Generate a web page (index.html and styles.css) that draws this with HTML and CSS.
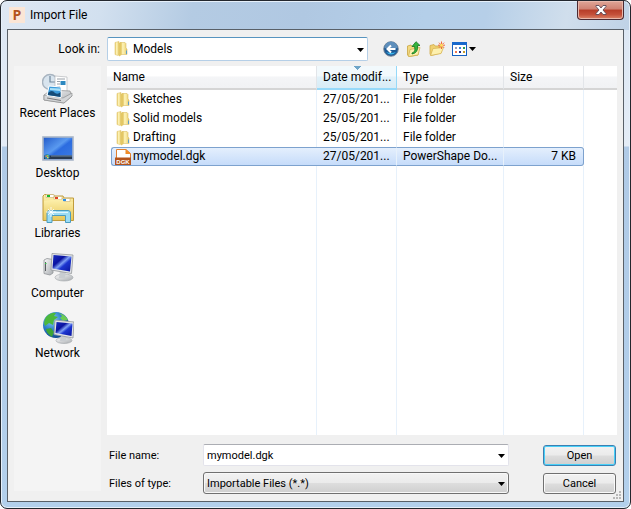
FILE: index.html
```html
<!DOCTYPE html>
<html lang="en">

<head>
    <meta charset="utf-8">
    <title>Import File</title>
    <link rel="stylesheet" href="styles.css">
</head>

<body>

    <svg class="defs" width="0" height="0">
        <defs>
            <linearGradient id="gold" x1="0" x2="1" y1="0" y2="0">
                <stop offset="0" stop-color="#e6c866"/>
                <stop offset="0.4" stop-color="#fdf3b8"/>
                <stop offset="0.75" stop-color="#f3df8e"/>
                <stop offset="1" stop-color="#dfc05a"/>
            </linearGradient>
            <linearGradient id="tab" x1="0" x2="0" y1="0" y2="1">
                <stop offset="0" stop-color="#fdf0ac"/>
                <stop offset="1" stop-color="#e8c758"/>
            </linearGradient>
            <linearGradient id="screen" x1="0" x2="1" y1="0" y2="1">
                <stop offset="0" stop-color="#1a2fc0"/>
                <stop offset="0.35" stop-color="#0a12a0"/>
                <stop offset="0.5" stop-color="#7fa0f4"/>
                <stop offset="0.62" stop-color="#1c35d0"/>
                <stop offset="1" stop-color="#0a149c"/>
            </linearGradient>
            <linearGradient id="desk" x1="0" x2="1" y1="0" y2="1">
                <stop offset="0" stop-color="#2058c8"/>
                <stop offset="0.45" stop-color="#5a9af0"/>
                <stop offset="0.55" stop-color="#2c6ce0"/>
                <stop offset="1" stop-color="#3c7ce4"/>
            </linearGradient>
            <radialGradient id="globe" cx="0.35" cy="0.3" r="0.8">
                <stop offset="0" stop-color="#8fd0f8"/>
                <stop offset="0.5" stop-color="#2a7cc8"/>
                <stop offset="1" stop-color="#0c3c80"/>
            </radialGradient>
            <linearGradient id="silver" x1="0" x2="1" y1="0" y2="1">
                <stop offset="0" stop-color="#fafafa"/>
                <stop offset="1" stop-color="#a8acb0"/>
            </linearGradient>
            <symbol id="folder" viewBox="0 0 16 16">
                <path d="M7 1.500 H12 L13 2.500 V7 L14 8 V13.500 H7Z" fill="url(#gold)" stroke="#dcc068" stroke-width=".6"/>
                <path d="M2 1.500 L6 .5 V14 L5 14.500 L2 13.500Z" fill="url(#gold)" stroke="#e0c670" stroke-width=".6"/>
                <path d="M6 2 L8.500 1 V14 L6 15.500Z" fill="#e3c765"/>
                <path d="M13.500 9.500 V13" stroke="#5c9cc8"/>
            </symbol>
            <symbol id="arrow" viewBox="0 0 7 4">
                <path d="M0 0 H7 L3.500 4Z"/>
            </symbol>
        </defs>
    </svg>

    <div class="window">
        <div class="title-bar">
            <svg class="app-icon" viewBox="0 0 16 16" width="16" height="16">
                <rect width="16" height="16" fill="#fbe6d6"/>
                <text x="8" y="13" class="app-letter">P</text>
            </svg>
            <h1>Import File</h1>
            <button class="close" type="button" aria-label="Close">
                <svg viewBox="0 0 12 10" width="12" height="10">
                    <path d="M1 .5 H4 L6 3 L8 .5 H11 V1.500 L8 5 L11 8.500 V9.500 H8 L6 7 L4 9.500 H1 V8.500 L4 5 L1 1.500Z" fill="#fff" stroke="#5b4a58" stroke-width=".9"/>
                </svg>
            </button>
        </div>

        <form class="client">
            <div class="look-row">
                <label for="lookIn">Look in:</label>
                <div class="combo look-combo">
                    <svg class="combo-icon" width="16" height="16"><use href="#folder"/></svg>
                    <select id="lookIn">
                        <option>Models</option>
                    </select>
                    <svg class="combo-arrow" width="7" height="4"><use href="#arrow"/></svg>
                </div>
                <div class="tools">
                    <button type="button" title="Back">
                        <svg viewBox="0 0 16 16" width="16" height="16">
                            <circle cx="8" cy="8" r="7.300" fill="#1d5a96" stroke="#7c8894" stroke-width=".9"/>
                            <path d="M1.500 7 A6.500 6.500 0 0 1 14.500 7 Q8 9 1.500 7Z" fill="#5e8fbc"/>
                            <path d="M3 11 Q8 16 13 11 Q8 13 3 11Z" fill="#3cb8ec"/>
                            <path d="M12.500 8 H4.500 M8 4.500 L4.500 8 L8 11.500" fill="none" stroke="#fff" stroke-width="2"/>
                        </svg>
                    </button>
                    <button type="button" title="Up one level">
                        <svg viewBox="0 0 16 16" width="16" height="16">
                            <path d="M1.500 5 L5 4 L6 5.500 H12 V14 L3 15.500 L1.500 14Z" fill="#f3d980" stroke="#c8a440" stroke-width=".8"/>
                            <path d="M4 8.500 L14 6.500 L12 14 L2.500 15.500Z" fill="#fdf0ae" stroke="#d2b050" stroke-width=".8"/>
                            <path d="M6 12 Q10 11 8.500 5.500 H6 L10 .7 L14 4.500 H11.500 Q12.500 12 6 13Z" fill="#34b43c" stroke="#167a22" stroke-width=".8"/>
                        </svg>
                    </button>
                    <button type="button" title="New folder">
                        <svg viewBox="0 0 16 16" width="16" height="16">
                            <path d="M1 4.500 L5 3.500 L6 5 H12 V12 L2 14.500 L1 13Z" fill="#f0d070" stroke="#cfa94a" stroke-width=".8"/>
                            <path d="M4 7.500 L14.500 6.500 L12 12.500 L1.500 14.500Z" fill="#fdf0ae" stroke="#d8b556" stroke-width=".8"/>
                            <path d="M12.500 0.500 V8 M9 4.200 H16 M10 1.700 L15 6.700 M15 1.700 L10 6.700" stroke="#f0683c" stroke-width="1"/>
                            <circle cx="12.500" cy="4.200" r="1.500" fill="#ffe060"/>
                        </svg>
                    </button>
                    <button type="button" title="View menu" class="view">
                        <svg viewBox="0 0 15 14" width="15" height="14">
                            <rect x=".5" y=".5" width="14" height="13" fill="#fff" stroke="#1460c0"/>
                            <rect width="15" height="3" fill="#1768cc"/>
                            <path d="M3 5 h2 v2 h-2z" fill="#9a9cb8"/>
                            <path d="M7 5 h2 v2 h-2z" fill="#3c80d8"/>
                            <path d="M11 5 h2 v2 h-2z" fill="#2c9c50"/>
                            <path d="M3 9 h2 v2 h-2z" fill="#f07850"/>
                            <path d="M7 9 h2 v2 h-2z" fill="#1c2c90"/>
                            <path d="M11 9 h2 v2 h-2z" fill="#c89c28"/>
                        </svg>
                        <svg width="7" height="4"><use href="#arrow"/></svg>
                    </button>
                </div>
            </div>

            <div class="middle">
                <nav class="places">
                    <a href="#recent">
                        <svg viewBox="0 0 32 32" width="32" height="32">
                            <circle cx="8" cy="10" r="7.500" fill="#d8e4ee" stroke="#a8b4c0" stroke-width="1.400"/>
                            <path d="M8 4 V10 H13" fill="none" stroke="#70889c" stroke-width="1.200"/>
                            <path d="M13 4 L25 5 V20 H13Z" fill="#fff" stroke="#b4b8bc" stroke-width=".7"/>
                            <path d="M15 7 H23 M15 9.500 H18 M15 12 H18 M15 14.500 H18" stroke="#98a0a8"/>
                            <rect x="18.500" y="9" width="5" height="4" fill="#2c88c0"/>
                            <path d="M2 23 L9 18 L28 19 L30 24 L22 31 L2 28Z" fill="url(#silver)" stroke="#8c8c8c" stroke-width=".7"/>
                            <path d="M2 23 L21 26 L30 21 V24 L22 31 L2 28Z" fill="#d4d6d8" stroke="#848688" stroke-width=".6"/>
                            <path d="M7 14 L19 15 V25.500 L5 23.500Z" fill="#3c9cdc" stroke="#fff"/>
                            <path d="M6 21 Q10 17 13 21 Q16 23 18.500 20 V25 L6 23Z" fill="#154c78"/>
                            <path d="M8 16 L18 16.500 V19 L8 18Z" fill="#a8e0f8"/>
                            <path d="M5 26 L19 28.500" stroke="#787a7c"/>
                        </svg>
                        <span>Recent Places</span>
                    </a>
                    <a href="#desktop">
                        <svg viewBox="0 0 32 32" width="32" height="32">
                            <rect x="1" y="5" width="30" height="23" fill="url(#desk)" stroke="#a9b6c8" stroke-width="1.600"/>
                            <rect x="2" y="23.500" width="28" height="3.500" fill="#28384e"/>
                            <path d="M9 24 H30" stroke="#70889c"/>
                            <circle cx="5" cy="24.500" r="2.600" fill="#2c84b4"/>
                            <path d="M3.500 23.500 h1.500 v1.500 h-1.500z" fill="#f08040"/>
                            <path d="M5 23 h1.500 v1.500 h-1.500z" fill="#8cd850"/>
                            <path d="M5 25 h1.500 v1.300 h-1.500z" fill="#f8d848"/>
                        </svg>
                        <span>Desktop</span>
                    </a>
                    <a href="#libraries">
                        <svg viewBox="0 0 32 32" width="32" height="32">
                            <path d="M1 28.500 V4 L2.500 2.500 H11 L12 4 H21 L22 6 H31.500 V28.500Z" fill="url(#tab)" stroke="#c09c3c"/>
                            <path d="M4 2.500 h8 v3 h-8z M12 4.500 h8 v3 h-8z M20 6.500 h8 v3 h-8z" fill="#fff" stroke="#c8b070" stroke-width=".6"/>
                            <path d="M5 3 h3 v2 h-3z" fill="#1cb82c"/>
                            <path d="M13 5 h3 v2 h-3z" fill="#e04424"/>
                            <path d="M21 7 h3 v2 h-3z" fill="#2c90e8"/>
                            <path d="M2 9 L13 7.500 H20 L22 10 H31 V28 H2Z" fill="url(#tab)"/>
                            <path d="M5 30.500 V21 Q5 18.500 7.500 18.500 H26 Q28.500 18.500 28.500 21 V30.500 H23.500 V23.500 H10 V30.500Z" fill="#9cdcf4" stroke="#4c9cc0"/>
                            <path d="M8 20.500 H26" stroke="#dff6ff"/>
                            <path d="M9 15 V25 M4 20 H14 M6 17 L12 23 M12 17 L6 23" stroke="#fff" stroke-width=".8"/>
                        </svg>
                        <span>Libraries</span>
                    </a>
                    <a href="#computer">
                        <svg viewBox="0 0 32 32" width="32" height="32">
                            <path d="M2 8 L5 6.500 L11 7.500 V21 L8 23 L2 21.500Z" fill="url(#silver)" stroke="#909498" stroke-width=".8"/>
                            <path d="M3.500 10 V19" stroke="#585c60"/>
                            <path d="M3 11.500 h1.500" stroke="#34c848"/>
                            <ellipse cx="22" cy="25.500" rx="9" ry="3.500" fill="url(#silver)" stroke="#a0a4a8" stroke-width=".6"/>
                            <path d="M18 18 L24 19 L23 26 H17Z" fill="#c8ccd0"/>
                            <path d="M10 1.500 L31 3 L29.500 21.500 L9 18Z" fill="#e4e6e8" stroke="#94989c" stroke-width=".8"/>
                            <path d="M11.500 3 L29.500 4.500 L28 19.500 L10.500 16.500Z" fill="url(#screen)"/>
                        </svg>
                        <span>Computer</span>
                    </a>
                    <a href="#network">
                        <svg viewBox="0 0 32 32" width="32" height="32">
                            <circle cx="14" cy="13" r="13" fill="url(#globe)"/>
                            <path d="M4 5 Q9 0 14 1 L12 4 L16 5 L12 8 L11 13 L7 11 L3 14 Q1 10 4 5Z" fill="#4cb83c"/>
                            <path d="M17 1 Q24 3 26 8 L21 9 L18 6 L20 4Z" fill="#6ccc54"/>
                            <path d="M4 17 L9 16 L12 20 L10 25 Q4 21 4 17Z" fill="#3ca434"/>
                            <ellipse cx="22" cy="28.500" rx="8" ry="3" fill="url(#silver)" stroke="#a0a4a8" stroke-width=".6"/>
                            <path d="M19 23 H24 V29 H18Z" fill="#c8ccd0"/>
                            <path d="M13 8 L32 10 L31 26 L12 22.500Z" fill="#e4e6e8" stroke="#94989c" stroke-width=".8"/>
                            <path d="M14.500 10 L30.500 11.500 L29.500 24 L13.500 21Z" fill="url(#screen)"/>
                        </svg>
                        <span>Network</span>
                    </a>
                </nav>

                <div class="file-list">
                    <table>
                        <colgroup>
                            <col class="col-name">
                            <col class="col-date">
                            <col class="col-type">
                            <col class="col-size">
                            <col>
                        </colgroup>
                        <thead>
                            <tr>
                                <th>Name</th>
                                <th class="sorted">Date modif...</th>
                                <th>Type</th>
                                <th>Size</th>
                                <th></th>
                            </tr>
                        </thead>
                        <tbody>
                            <tr>
                                <td><div class="name"><svg width="16" height="16"><use href="#folder"/></svg>Sketches</div></td>
                                <td>27/05/201...</td>
                                <td>File folder</td>
                                <td class="size"></td>
                                <td></td>
                            </tr>
                            <tr>
                                <td><div class="name"><svg width="16" height="16"><use href="#folder"/></svg>Solid models</div></td>
                                <td>25/05/201...</td>
                                <td>File folder</td>
                                <td class="size"></td>
                                <td></td>
                            </tr>
                            <tr>
                                <td><div class="name"><svg width="16" height="16"><use href="#folder"/></svg>Drafting</div></td>
                                <td>25/05/201...</td>
                                <td>File folder</td>
                                <td class="size"></td>
                                <td></td>
                            </tr>
                            <tr class="selected">
                                <td>
                                    <div class="name">
                                        <svg viewBox="0 0 16 16" width="16" height="16">
                                            <path d="M1.500 .5 H11 L15.500 4.500 V15.500 H1.500Z" fill="#fff" stroke="#e08030"/>
                                            <path d="M10.500 0 L16 5 H10.500Z" fill="#f08c28"/>
                                            <rect x="0" y="8.500" width="16" height="7.500" fill="#b4541c"/>
                                            <text x="8" y="14.500" class="badge-text">DGK</text>
                                        </svg>mymodel.dgk
                                    </div>
                                </td>
                                <td>27/05/201...</td>
                                <td>PowerShape Do...</td>
                                <td class="size">7 KB</td>
                                <td></td>
                            </tr>
                            <tr class="rest">
                                <td></td>
                                <td></td>
                                <td></td>
                                <td></td>
                                <td></td>
                            </tr>
                        </tbody>
                    </table>
                </div>

                <div class="fields">
                    <label for="fileName">File name:</label>
                    <div class="combo name-combo">
                        <input type="text" id="fileName" value="mymodel.dgk">
                        <svg class="combo-arrow" width="7" height="4"><use href="#arrow"/></svg>
                    </div>
                    <button type="submit" class="btn default">Open</button>

                    <label for="fileType">Files of type:</label>
                    <div class="combo type-combo">
                        <select id="fileType">
                            <option>Importable Files (*.*)</option>
                        </select>
                        <svg class="combo-arrow" width="7" height="4"><use href="#arrow"/></svg>
                    </div>
                    <button type="button" class="btn">Cancel</button>
                </div>
            </div>

            <svg class="grip" viewBox="0 0 8 8" width="8" height="8">
                <path d="M6 0h2v2h-2z M3 3h2v2h-2z M6 3h2v2h-2z M0 6h2v2h-2z M3 6h2v2h-2z M6 6h2v2h-2z" fill="#b8b8b8"/>
            </svg>
        </form>
    </div>

</body>

</html>
```

FILE: styles.css
```css
* {
    box-sizing: border-box;
}

body {
    margin: 0;
    background: #fff;
    color: #000;
    font-family: Roboto, "Open Sans", sans-serif;
    font-size: 12px;
}

.defs {
    position: absolute;
}

button,
input,
select {
    margin: 0;
    color: inherit;
    font: inherit;
}

.window {
    display: flex;
    flex-direction: column;
    height: 100vh;
    padding: 0 6px 6px;
    border: 1px solid #23272e;
    border-radius: 7px;
    background:
        linear-gradient(100deg, #dfe8f3 0, #d2e0ef 100px, #b4cbe3 190px, #b0c8e2 300px, #b4cfe9 420px, #b6cfe8 480px, #d0deec 560px, #bfd2e6 100%) top / 100% 29px no-repeat,
        linear-gradient(#dbe6f3 0, #e4ecf6 145px, #b0cae6 146px, #b3d0ec 100%);
    box-shadow: inset 0 0 0 1px #e6f0fa;
}

/* title bar */
.title-bar {
    display: flex;
    flex: none;
    align-items: center;
    height: 28px;
    padding: 0 0 0 2px;
}

.app-letter {
    fill: #b4531c;
    font: bold 14px "Open Sans", sans-serif;
    text-anchor: middle;
}

.title-bar h1 {
    flex: 1;
    margin: 0 0 0 5px;
    font-size: 12px;
    font-weight: normal;
}

.close {
    display: flex;
    align-items: center;
    align-self: flex-start;
    justify-content: center;
    width: 47px;
    height: 19px;
    padding: 0;
    border: 1px solid #4b2a32;
    border-top: 0;
    border-radius: 0 0 4px 4px;
    background: linear-gradient(#e0a698 0, #d08272 45%, #b63c28 50%, #c4503a 75%, #dc8468 100%);
    box-shadow: inset 0 0 0 1px #e8b8ac;
}

/* dialog area */
.client {
    position: relative;
    display: flex;
    flex: 1;
    flex-direction: column;
    min-height: 0;
    padding: 7px 6px;
    border: 1px solid #596068;
    background: #f0f0f0;
}

.look-row {
    display: flex;
    align-items: center;
    height: 24px;
    margin-bottom: 5px;
}

.look-row label {
    width: 86px;
    margin-right: 7px;
    text-align: right;
}

.combo {
    position: relative;
    display: flex;
}

.combo select,
.combo input {
    width: 100%;
    height: 100%;
    padding: 0 20px 0 3px;
    border: 1px solid #e3e3eb;
    border-radius: 2px;
    outline: 0;
    background: #fff;
    appearance: none;
}

.combo-icon {
    position: absolute;
    top: 4px;
    left: 6px;
}

.combo-arrow {
    position: absolute;
    top: 11px;
    right: 4px;
    pointer-events: none;
}

.look-combo {
    flex: 0 1 261px;
    height: 24px;
}

.look-combo select {
    padding-left: 25px;
    border-color: #b5cfe7;
    border-top-color: #5794bf;
}

.tools {
    display: flex;
    gap: 7px;
    margin-left: 15px;
}

.tools button {
    display: flex;
    align-items: center;
    padding: 0;
    border: 0;
    background: none;
}

.tools .view {
    gap: 2px;
}

/* places bar, list and fields */
.middle {
    display: grid;
    flex: 1;
    grid-template-columns: 87px 1fr;
    grid-template-rows: 1fr auto;
    column-gap: 6px;
    min-height: 0;
}

.places {
    display: flex;
    flex-direction: column;
    grid-row: 1 / 3;
    gap: 10px;
    margin-bottom: 3px;
    padding-top: 6px;
    background: #f4f4f4;
}

.places a {
    display: flex;
    flex-direction: column;
    align-items: center;
    height: 50px;
    color: #000;
    line-height: 18px;
    text-decoration: none;
    white-space: nowrap;
}

.places svg {
    flex: none;
}

.file-list {
    display: flex;
    background: #fff;
}

.file-list table {
    width: 100%;
    height: 100%;
    border-collapse: separate;
    border-spacing: 0;
    table-layout: fixed;
}

.col-name {
    width: 210px;
}

.col-date,
.col-size {
    width: 80px;
}

.col-type {
    width: 107px;
}

.file-list th {
    height: 24px;
    padding: 0 0 0 6px;
    border-right: 1px solid #e2e5e9;
    border-bottom: 2px solid #d5d5d5;
    background: linear-gradient(#fff 45%, #f4f5f7 50%, #f1f2f4);
    font-weight: normal;
    text-align: left;
    white-space: nowrap;
}

.file-list th:last-child {
    border-right: 0;
}

.file-list th.sorted {
    border-right-color: #96d9f9;
    border-bottom-color: #96d9f9;
    background:
        conic-gradient(from -45deg at 50% 100%, #6fa5c8 90deg, transparent 0) 36px 0 / 8px 4px no-repeat,
        linear-gradient(#f2f9fc 45%, #e1f1f9 50%, #d8ecf6);
}

.file-list td {
    height: 19px;
    padding: 0 0 0 6px;
    border-right: 1px solid #e7f1fb;
    line-height: 17px;
    white-space: nowrap;
}

.file-list td:first-child {
    padding-left: 4px;
}

.file-list td:last-child {
    border-right: 0;
}

.file-list td.size {
    padding-right: 7px;
    text-align: right;
}

.name {
    display: flex;
    gap: 2px;
    align-items: center;
    height: 19px;
    padding-left: 4px;
}

.selected .name,
.selected td:not(:first-child):not(:last-child) {
    border-top: 1px solid #7da2ce;
    border-bottom: 1px solid #7da2ce;
    background: linear-gradient(#e4effd, #c6dcfa);
}

.file-list .selected td:first-child {
    border-right: 0;
}

.selected .name {
    padding-left: 3px;
    border-left: 1px solid #7da2ce;
    border-radius: 3px 0 0 3px;
}

.selected .size {
    border-right-color: #7da2ce;
    border-radius: 0 3px 3px 0;
}

.badge-text {
    fill: #fff;
    font: bold 6px "Liberation Sans", sans-serif;
    text-anchor: middle;
}

.file-list .rest td {
    height: auto;
}

.fields {
    display: grid;
    grid-template-columns: 94px 1fr 73px;
    gap: 6px 0;
    align-items: center;
    padding: 9px 1px 0 2px;
    font-size: 11px;
}

.fields .combo {
    height: 22px;
    margin-right: 34px;
}

.name-combo input {
    border-top-color: #abadb3;
}

.fields .combo-arrow {
    top: 10px;
}

.type-combo select {
    border-color: #707070;
    border-radius: 3px;
    background: linear-gradient(#f2f2f2 0, #ebebeb 48%, #dddddd 52%, #cfcfcf);
    box-shadow: inset 0 0 0 1px #f8f8f8;
}

.btn {
    height: 21px;
    padding: 0;
    border: 1px solid #707070;
    border-radius: 3px;
    background: linear-gradient(#f2f2f2 0, #ebebeb 48%, #dddddd 52%, #cfcfcf);
    box-shadow: inset 0 0 0 1px #fafafa;
}

.btn.default {
    border-color: #3c7fb1;
    box-shadow: inset 0 0 0 1px #48d0f8;
}

.grip {
    position: absolute;
    right: 2px;
    bottom: 2px;
}
```
